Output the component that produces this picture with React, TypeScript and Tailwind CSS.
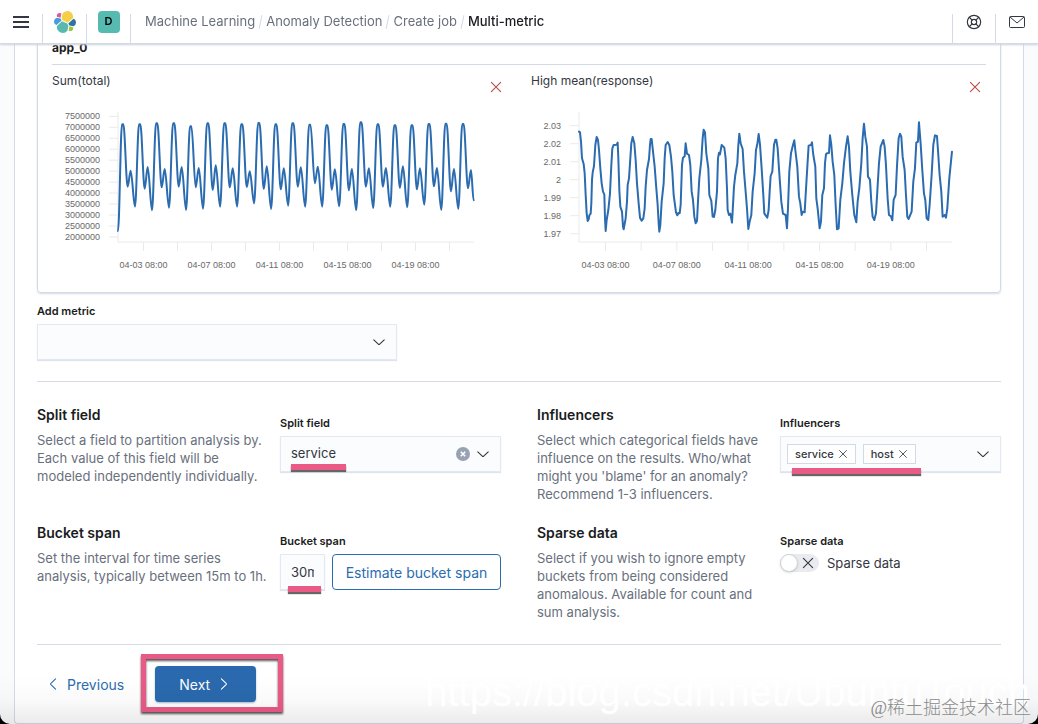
import { LifeBuoy } from "lucide-react";
import type { ReactNode } from "react";

// [peak, dip, midday peak, trough] per day, in plot units
const TOTAL_DAYS = [
  [88, 275, 227, 335],
  [88, 281, 216, 346],
  [85, 277, 222, 338],
  [85, 275, 216, 345],
  [94, 277, 219, 341],
  [85, 285, 211, 335],
  [85, 277, 220, 335],
  [88, 276, 229, 325],
  [84, 282, 214, 342],
  [88, 283, 220, 332],
  [85, 275, 217, 335],
  [89, 265, 215, 335],
  [91, 284, 223, 334],
  [87, 286, 222, 346],
  [82, 275, 220, 339],
  [88, 275, 219, 335],
  [91, 279, 214, 337],
  [91, 283, 220, 329],
  [87, 274, 219, 345],
  [86, 289, 222, 342],
  [87, 280, 225, 316],
];

const RESPONSE_POINTS =
  "0,110 3,112 6,140 9,190 14,207 17,235 20,300 23,355 26,378 29,373 31,361 35,356 37,325 39,255 41,233 45,213 49,150 53,126 57,135 60,165 64,220 68,265 72,290 76,298 78,370 80,408 83,375 88,345 93,295 97,210 100,160 104,150 113,149 116,143 118,190 121,285 124,335 129,350 132,395 134,403 140,370 144,320 146,270 150,250 153,205 157,145 161,126 166,145 170,195 174,265 179,325 183,368 188,377 193,370 197,340 200,275 204,225 210,192 213,150 215,132 218,132 221,160 227,215 232,280 236,330 239,385 241,410 244,390 248,320 254,265 257,190 260,150 266,141 271,150 276,185 280,230 284,300 288,330 291,352 295,361 298,354 302,355 305,330 307,270 309,210 312,188 317,184 320,145 324,176 330,180 334,210 338,290 342,315 346,365 350,385 354,378 357,320 361,250 367,195 371,130 374,104 378,112 382,175 388,220 391,300 397,318 401,365 405,366 409,345 414,290 417,190 420,173 423,178 428,150 436,158 440,190 444,280 446,345 450,360 454,356 459,383 461,350 465,275 469,240 475,205 478,150 481,116 485,145 491,162 495,230 500,290 504,340 508,402 512,380 517,360 521,290 527,235 531,165 535,148 539,117 543,148 548,220 553,300 556,355 560,361 565,368 569,345 572,290 575,243 580,230 585,150 589,134 592,134 596,160 601,235 607,320 612,356 620,360 624,400 627,340 631,230 636,175 642,150 646,136 649,165 655,215 660,305 664,325 668,360 671,350 677,352 680,300 686,200 689,152 696,150 699,142 703,180 709,215 712,310 716,340 722,400 726,380 730,300 735,280 738,205 741,178 744,175 750,174 753,121 757,150 761,200 766,240 770,330 774,403 779,400 784,315 790,265 795,205 801,155 806,124 810,155 814,230 820,300 826,360 832,382 836,320 841,280 847,205 851,130 855,86 859,125 864,155 867,245 873,254 877,320 881,365 886,375 891,355 895,290 900,205 905,155 913,135 917,155 921,210 926,310 930,360 936,364 940,376 944,315 950,300 954,215 959,130 963,116 967,125 971,185 977,225 981,300 985,365 989,372 998,350 1003,260 1008,220 1012,143 1017,140 1020,82 1025,145 1030,225 1035,295 1039,315 1043,370 1048,375 1052,330 1058,240 1063,150 1068,121 1074,123 1077,165 1082,240 1087,290 1091,365 1097,360 1101,368 1105,340 1111,250 1119,170";

const DATES = ["04-03 08:00", "04-07 08:00", "04-11 08:00", "04-15 08:00", "04-19 08:00"];

function totalPath() {
  const points: [number, number][] = [[0, 408]];
  TOTAL_DAYS.forEach(([peak, dip, mid, trough], day) => {
    const x = 14 + day * 51.05;
    points.push([x - 2, peak], [x + 2, peak], [x + 15, dip], [x + 24, mid]);
    points.push([day === TOTAL_DAYS.length - 1 ? x + 32 : x + 37, trough]);
  });
  return points
    .map(([x, y], i) => {
      if (i === 0) return `M${x},${y}`;
      const [px, py] = points[i - 1];
      const dx = (x - px) * 0.35;
      return `C${px + dx},${py} ${x - dx},${y} ${x},${y}`;
    })
    .join(" ");
}

function Icon({ d, className }: { d: string; className: string }) {
  return (
    <svg
      viewBox="0 0 16 16"
      className={className}
      fill="none"
      stroke="currentColor"
      strokeWidth="1.1"
      strokeLinecap="round"
      aria-hidden="true"
    >
      <path d={d} />
    </svg>
  );
}

const CROSS = "M3.4 3.4l9.2 9.2M12.6 3.4l-9.2 9.2";
const DOWN = "M2.8 5.8l4.5 4.4a1 1 0 001.4 0l4.5-4.4";
const LEFT = "M10.6 2.8L5.9 7.3a1 1 0 000 1.4l4.7 4.5";
const RIGHT = "M5.4 2.8l4.7 4.5a1 1 0 010 1.4l-4.7 4.5";

type ChartProps = {
  title: string;
  axisX: number;
  plotWidth: number;
  yLabels: string[];
  yStart: number;
  yStep: number;
  xStart: number;
  xStep: number;
  xTicks: number;
  children: ReactNode;
};

function MetricChart({
  title,
  axisX,
  plotWidth,
  yLabels,
  yStart,
  yStep,
  xStart,
  xStep,
  xTicks,
  children,
}: ChartProps) {
  return (
    <div>
      <div className="flex h-7 items-end justify-between">
        <h4 className="self-start text-[12px] leading-5 text-[#343741]">{title}</h4>
        <button
          type="button"
          aria-label={`Remove ${title}`}
          className="flex h-6 w-[22px] items-center justify-center text-[#bd4a42]"
        >
          <Icon d={CROSS} className="size-4" />
        </button>
      </div>
      <svg
        viewBox="0 0 455 178"
        preserveAspectRatio="xMinYMin meet"
        className="block h-[178px] w-full"
        role="img"
        aria-label={title}
      >
        <g stroke="#eaeaea" strokeWidth="1">
          <path d={`M${axisX} 13V143H${axisX + plotWidth}`} fill="none" />
          {yLabels.map((label, i) => (
            <path key={label} d={`M${axisX - 9} ${yStart + i * yStep}h9`} />
          ))}
          {Array.from({ length: xTicks }, (_, i) => (
            <path key={i} d={`M${xStart + i * xStep} 143v9`} />
          ))}
        </g>
        <g className="fill-[#696969] font-['Liberation_Sans',sans-serif] text-[9px]">
          {yLabels.map((label, i) => (
            <text key={label} x={axisX - 18} y={yStart + i * yStep + 3} textAnchor="end">
              {label}
            </text>
          ))}
          {DATES.map((date, i) => (
            <text key={date} x={xStart + i * xStep * 2} y="169" textAnchor="middle">
              {date}
            </text>
          ))}
        </g>
        <g
          transform={`translate(${axisX} -4) scale(0.3333)`}
          fill="none"
          stroke="#2b6cb0"
          strokeWidth="6"
          strokeLinejoin="round"
          strokeLinecap="round"
        >
          {children}
        </g>
      </svg>
    </div>
  );
}

function ElasticLogo() {
  return (
    <svg viewBox="0 0 32 32" className="size-6" aria-hidden="true">
      <path fill="#f4cf47" d="M12.58 13.787l7.002 3.211 7.066-6.213a7.85 7.85 0 00.152-1.557c0-4.287-3.464-7.774-7.72-7.774a7.71 7.71 0 00-6.37 3.374l-1.176 6.134z" />
      <path fill="#5ab9ae" d="M5.333 21.228c-.1.521-.152 1.051-.152 1.582 0 4.3 3.484 7.8 7.768 7.8a7.737 7.737 0 006.397-3.4l1.166-6.108-1.556-2.992-7.03-3.22z" />
      <path fill="#db5a96" d="M5.288 9.067l4.8 1.137L11.14 4.72A3.81 3.81 0 008.82 3.93c-2.09 0-3.79 1.71-3.79 3.81 0 .46.09.91.26 1.33z" />
      <path fill="#4a9bdc" d="M4.872 10.214A5.333 5.333 0 001.3 15.2c0 2.2 1.37 4.18 3.4 4.96l6.73-6.13-1.24-2.65z" />
      <path fill="#9cc33e" d="M20.873 27.226a3.79 3.79 0 002.306.79c2.09 0 3.79-1.71 3.79-3.81 0-.46-.08-.91-.24-1.33l-4.79-1.13z" />
      <path fill="#3073a3" d="M21.848 20.581l5.278 1.237a5.335 5.335 0 003.574-5.04c0-2.21-1.36-4.18-3.39-4.96l-6.9 6.08z" />
    </svg>
  );
}

function TopBar() {
  const crumbs = ["Machine Learning", "Anomaly Detection", "Create job"];
  return (
    <header className="fixed inset-x-0 top-0 z-20 flex h-11 items-stretch border-b border-[#d3dae6] bg-white shadow-[0_1px_2px_#c9d0dc]">
      <div className="flex w-[42px] items-center justify-center">
        <button type="button" aria-label="Menu" className="flex w-4 flex-col gap-[3px]">
          <span className="h-0.5 w-full bg-[#343741]" />
          <span className="h-0.5 w-full bg-[#343741]" />
          <span className="h-0.5 w-full bg-[#343741]" />
        </button>
      </div>
      <Divider />
      <a href="#home" aria-label="Elastic home" className="flex w-[43px] items-center justify-center">
        <ElasticLogo />
      </a>
      <Divider />
      <div className="flex w-[43px] items-center justify-center">
        <button type="button" className="size-[22px] rounded-sm bg-[#57bab0] text-[11px] font-semibold text-black">
          D
        </button>
      </div>
      <Divider />
      <nav aria-label="Breadcrumb" className="ml-3.5 flex flex-1 items-center text-[13px] text-[#69707d]">
        {crumbs.map((crumb) => (
          <span key={crumb} className="flex items-center">
            <a href="#crumb">{crumb}</a>
            <span className="mx-[5px] h-3.5 w-px rotate-12 bg-[#d3dae6]" />
          </span>
        ))}
        <span aria-current="page" className="font-medium text-[#1a1c21]">
          Multi-metric
        </span>
      </nav>
      <Divider />
      <button type="button" aria-label="Help" className="flex w-[42px] items-center justify-center text-[#343741]">
        <LifeBuoy className="size-4" strokeWidth={1.75} />
      </button>
      <Divider />
      <button type="button" aria-label="Newsfeed" className="flex w-[42px] items-center justify-center text-[#343741]">
        <svg viewBox="0 0 16 12" className="h-3 w-4" fill="none" stroke="currentColor">
          <rect x="0.5" y="0.5" width="15" height="11" rx="1" />
          <path d="M1 1l7 6 7-6" />
        </svg>
      </button>
    </header>
  );
}

function Divider() {
  return <div className="mt-3.5 w-px bg-[#d3dae6]" />;
}

function Section({ title, text, children }: { title: string; text: string; children: ReactNode }) {
  return (
    <section className="grid grid-cols-[minmax(0,1fr)_221px] gap-x-2.5">
      <div>
        <h3 className="text-[14px] leading-6 font-semibold text-[#1a1c21]">{title}</h3>
        <p className="mt-1 mb-px text-[13px] leading-[18px] text-[#69707d]">{text}</p>
      </div>
      <div className="pt-3">{children}</div>
    </section>
  );
}

const labelClass = "mb-[5px] block text-[11px] leading-4 font-semibold text-[#1a1c21]";
const controlClass = "h-9 border border-[#e4e8f0] bg-[#fbfcfd] text-[13px] text-[#343741] shadow-[0_1px_1px_#dfe4ec]";
const markClass =
  "pointer-events-none absolute h-1.5 bg-[#ea5a87] shadow-[0_2px_1px_#666]";

export default function App() {
  return (
    <div className="bg-black">
      <div className="relative min-h-screen overflow-hidden rounded-b-[10px] bg-[#fafbfd] font-['Inter',sans-serif] text-[#343741]">
        <TopBar />

        <main className="mx-3.5 min-h-screen rounded-b border-x border-b border-[#d3dae6] bg-white px-[22px] pb-5">
          <div className="rounded border border-[#d3dae6] px-3.5 pt-[37px] pb-[15px] shadow-[0_1px_2px_#d3dae6]">
            <h3 className="border-b border-[#d3dae6] pb-1.5 text-[12px] leading-5 font-bold text-[#1a1c21]">app_0</h3>
            <div className="grid grid-cols-2 gap-6 pt-1.5">
              <MetricChart
                title="Sum(total)"
                axisX={66}
                plotWidth={356}
                yLabels={[
                  "7500000",
                  "7000000",
                  "6500000",
                  "6000000",
                  "5500000",
                  "5000000",
                  "4500000",
                  "4000000",
                  "3500000",
                  "3000000",
                  "2500000",
                  "2000000",
                ]}
                yStart={17.3}
                yStep={10.97}
                xStart={91.5}
                xStep={34}
                xTicks={10}
              >
                <path d={totalPath()} />
              </MetricChart>
              <MetricChart
                title="High mean(response)"
                axisX={48}
                plotWidth={373}
                yLabels={["2.03", "2.02", "2.01", "2", "1.99", "1.98", "1.97"]}
                yStart={26.7}
                yStep={18}
                xStart={74.5}
                xStep={35.67}
                xTicks={10}
              >
                <polyline points={RESPONSE_POINTS} />
              </MetricChart>
            </div>
          </div>

          <div className="mt-2.5 max-w-[360px]">
            <label htmlFor="metric" className={labelClass}>
              Add metric
            </label>
            <div className="relative">
              <select id="metric" className={`${controlClass} w-full appearance-none px-2.5`}>
                <option value=""></option>
              </select>
              <Icon d={DOWN} className="pointer-events-none absolute top-2.5 right-2.5 size-4" />
            </div>
          </div>

          <hr className="mt-[21px] border-[#d3dae6]" />

          <div className="mt-[21px] grid grid-cols-2 gap-x-9 gap-y-[17px]">
            <Section
              title="Split field"
              text="Select a field to partition analysis by. Each value of this field will be modeled independently individually."
            >
              <label htmlFor="split" className={labelClass}>
                Split field
              </label>
              <div className="relative">
                <select id="split" className={`${controlClass} w-full appearance-none px-2.5`}>
                  <option>service</option>
                </select>
                <button
                  type="button"
                  aria-label="Clear split field"
                  className="absolute top-[11px] right-[31px] flex size-3.5 items-center justify-center rounded-full bg-[#98a2b3] text-white"
                >
                  <svg viewBox="0 0 6 6" className="size-1.5" stroke="currentColor" strokeWidth="1.6" aria-hidden="true">
                    <path d="M.8.8l4.4 4.4M5.2.8L.8 5.2" />
                  </svg>
                </button>
                <Icon d={DOWN} className="pointer-events-none absolute top-2.5 right-2.5 size-4" />
                <span className={`${markClass} top-7 left-[11px] w-[55px]`} />
              </div>
            </Section>

            <Section
              title="Influencers"
              text="Select which categorical fields have influence on the results. Who/what might you 'blame' for an anomaly? Recommend 1-3 influencers."
            >
              <span id="influencers" className={labelClass}>
                Influencers
              </span>
              <div
                role="group"
                aria-labelledby="influencers"
                className={`${controlClass} relative flex items-center gap-[7px] px-1.5`}
              >
                {["service", "host"].map((field) => (
                  <span
                    key={field}
                    className="flex h-5 items-center gap-[3px] border border-[#d3dae6] bg-white pr-1.5 pl-[7px] text-[11px] font-medium"
                  >
                    {field}
                    <button type="button" aria-label={`Remove ${field}`}>
                      <Icon d={CROSS} className="size-3" />
                    </button>
                  </span>
                ))}
                <button type="button" aria-label="Open influencers list" className="mr-[3px] ml-auto">
                  <Icon d={DOWN} className="size-4" />
                </button>
                <span className={`${markClass} top-[31px] left-[11px] w-[129px]`} />
              </div>
            </Section>

            <Section
              title="Bucket span"
              text="Set the interval for time series analysis, typically between 15m to 1h."
            >
              <label htmlFor="bucket" className={labelClass}>
                Bucket span
              </label>
              <div className="relative flex gap-[7px]">
                <input id="bucket" defaultValue="30m" className={`${controlClass} w-[45px] px-2.5`} />
                <button
                  type="button"
                  className="h-9 flex-1 rounded border border-[#2b6cb0] bg-white text-[14px] whitespace-nowrap text-[#2b6cb0]"
                >
                  Estimate bucket span
                </button>
                <span className={`${markClass} top-8 left-2 w-[33px]`} />
              </div>
            </Section>

            <Section
              title="Sparse data"
              text="Select if you wish to ignore empty buckets from being considered anomalous. Available for count and sum analysis."
            >
              <span className={labelClass}>Sparse data</span>
              <label className="relative flex w-fit items-center gap-2 text-[13px] leading-[18px]">
                <input type="checkbox" role="switch" className="h-[18px] w-[39px] appearance-none rounded-full bg-[#e9ebef]" />
                <span className="absolute left-0 size-[18px] rounded-full border border-[#cfd2d8] bg-white shadow-sm" />
                <Icon d={CROSS} className="absolute left-5 size-4" />
                Sparse data
              </label>
            </Section>
          </div>

          <hr className="mt-[22px] border-[#d3dae6]" />

          <div className="mt-[21px] flex items-center gap-[31px] text-[14px]">
            <button type="button" className="ml-2 flex h-9 items-center gap-1.5 text-[#2b6cb0]">
              <Icon d={LEFT} className="size-4" />
              Previous
            </button>
            <div className="relative">
              <button
                type="button"
                className="flex h-9 w-[101px] items-center justify-center gap-1.5 rounded bg-[#2a69ae] text-white shadow-[0_1px_2px_#a9bcd3]"
              >
                Next
                <Icon d={RIGHT} className="size-4" />
              </button>
              <span className="pointer-events-none absolute -top-3 -left-3.5 h-[58px] w-[142px] border-[5px] border-[#ea5a87] drop-shadow-[0_2px_1px_#555]" />
            </div>
          </div>
        </main>

        <div className="pointer-events-none absolute inset-x-0 bottom-0 h-12 bg-linear-to-b from-transparent via-black/2 to-black/8" />
        <div className="pointer-events-none absolute right-2 bottom-0 font-['Liberation_Sans',sans-serif] text-[40px] leading-[64px] text-white">
          https://blog.csdn.net/UbuntuTouch
        </div>
        <div className="pointer-events-none absolute right-[7px] bottom-1 font-['Liberation_Serif','Noto_Sans_CJK_SC',serif] text-[18px] leading-6 font-light text-[#8b8b8b]">
          @稀土掘金技术社区
        </div>
      </div>
    </div>
  );
}
